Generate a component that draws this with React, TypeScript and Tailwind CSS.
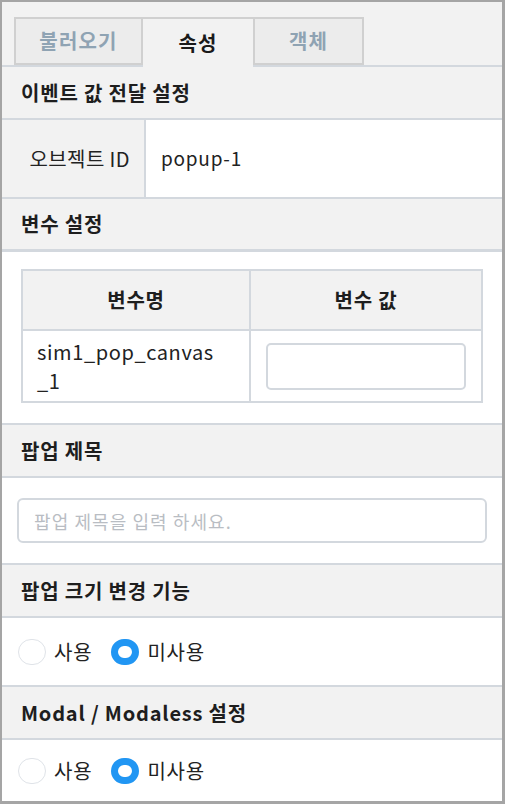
import React, { useState } from "react";

const font = "font-['Noto_Sans_CJK_KR','Noto_Sans',sans-serif]";

const Header = ({ title, line = "border-b-2" }: { title: string; line?: string }) => (
  <div className={`h-[53px] shrink-0 flex items-center px-[19px] bg-[#f2f2f2] ${line} border-[#d3d8de]`}>
    <span className="text-[20px] font-bold text-[#1e1e1e] tracking-[0.04em]">{title}</span>
  </div>
);

const Radio = ({ checked, label, onClick }: { checked: boolean; label: string; onClick: () => void }) => (
  <label className="flex items-center gap-[8px] cursor-pointer" onClick={onClick}>
    <span
      className={
        checked
          ? "w-[28px] h-[26px] rounded-full border-[7px] border-[#2196f3] bg-white"
          : "w-[28px] h-[26px] rounded-full border-[1.5px] border-[#dfe3e8] bg-white"
      }
    />
    <span className="text-[20px] text-[#222] tracking-[0.04em]">{label}</span>
  </label>
);

const RadioRow = ({ h }: { h: string }) => {
  const [use, setUse] = useState(false);
  return (
    <div className={`${h} flex items-center gap-[19px] px-[16px] bg-white`}>
      <Radio checked={use} label="사용" onClick={() => setUse(true)} />
      <Radio checked={!use} label="미사용" onClick={() => setUse(false)} />
    </div>
  );
};

export default function App() {
  const [tab, setTab] = useState(1);
  const tabs = ["불러오기", "속성", "객체"];

  return (
    <div className={`w-[505px] h-[804px] border-2 border-r-[3px] border-b-[3px] border-[#a5a5a5] bg-white flex flex-col overflow-hidden ${font}`}>
      <div className="shrink-0 bg-[#f2f2f2] pt-[15px] pl-[12px] flex border-b-2 border-[#d3d8de]">
        {tabs.map((t, i) =>
          i === tab ? (
            <button
              key={t}
              onClick={() => setTab(i)}
              className="w-[110px] h-[50px] -mb-[2px] border-t-2 border-[#d0d0d0] bg-[#f2f2f2] text-[20px] font-bold text-[#1a1a1a] tracking-[0.06em]"
            >
              {t}
            </button>
          ) : (
            <button
              key={t}
              onClick={() => setTab(i)}
              className={`${i === 0 ? "w-[129px]" : "w-[111px]"} h-[48px] border-2 border-[#d0d0d0] bg-[#ececec] text-[20px] font-bold text-[#8fa3b3] tracking-[0.06em]`}
            >
              {t}
            </button>
          )
        )}
      </div>

      <Header title="이벤트 값 전달 설정" />
      <div className="h-[79px] shrink-0 flex border-b-2 border-[#d3d8de]">
        <div className="w-[144px] bg-[#f2f2f2] border-r-2 border-[#d3d8de] flex items-center justify-end pr-[14px]">
          <span className="text-[20px] text-[#222] tracking-[0.02em]">오브젝트 ID</span>
        </div>
        <div className="flex-1 flex items-center pl-[15px] text-[19px] text-[#222] tracking-[0.04em]">popup-1</div>
      </div>

      <Header title="변수 설정" line="border-b-[3px]" />
      <div className="h-[173px] shrink-0 pt-[17px] px-[19px] bg-white border-b-2 border-[#d3d8de]">
        <table className="w-[462px] border-collapse border-2 border-[#d3d8de]">
          <thead>
            <tr className="h-[60px] bg-[#f2f2f2]">
              <th className="w-[229px] border-2 border-[#d3d8de] text-[20px] font-bold text-[#1e1e1e] tracking-[0.04em]">변수명</th>
              <th className="border-2 border-[#d3d8de] text-[20px] font-bold text-[#1e1e1e] tracking-[0.04em]">변수 값</th>
            </tr>
          </thead>
          <tbody>
            <tr className="h-[72px]">
              <td className="border-2 border-[#d3d8de] pl-[14px] pr-[6px] text-[20px] leading-[29px] text-[#222] tracking-[0.03em]">
                sim1_pop_canvas
                <br />
                _1
              </td>
              <td className="border-2 border-[#d3d8de] px-[15px]">
                <input className="w-[200px] h-[47px] border-2 border-[#d3d8de] rounded-[5px] outline-none px-2" />
              </td>
            </tr>
          </tbody>
        </table>
      </div>

      <Header title="팝업 제목" />
      <div className="h-[87px] shrink-0 flex items-center px-[15px] bg-white border-b-2 border-[#d3d8de]">
        <input
          placeholder="팝업 제목을 입력 하세요."
          className="w-[470px] h-[45px] border-2 border-[#d3d8de] rounded-[6px] px-[15px] text-[18px] tracking-[0.06em] placeholder:text-[#b9bdc3] outline-none"
        />
      </div>

      <Header title="팝업 크기 변경 기능" />
      <div className="shrink-0 border-b-2 border-[#d3d8de]">
        <RadioRow h="h-[67px]" />
      </div>

      <Header title="Modal / Modaless 설정" />
      <RadioRow h="flex-1" />
    </div>
  );
}
